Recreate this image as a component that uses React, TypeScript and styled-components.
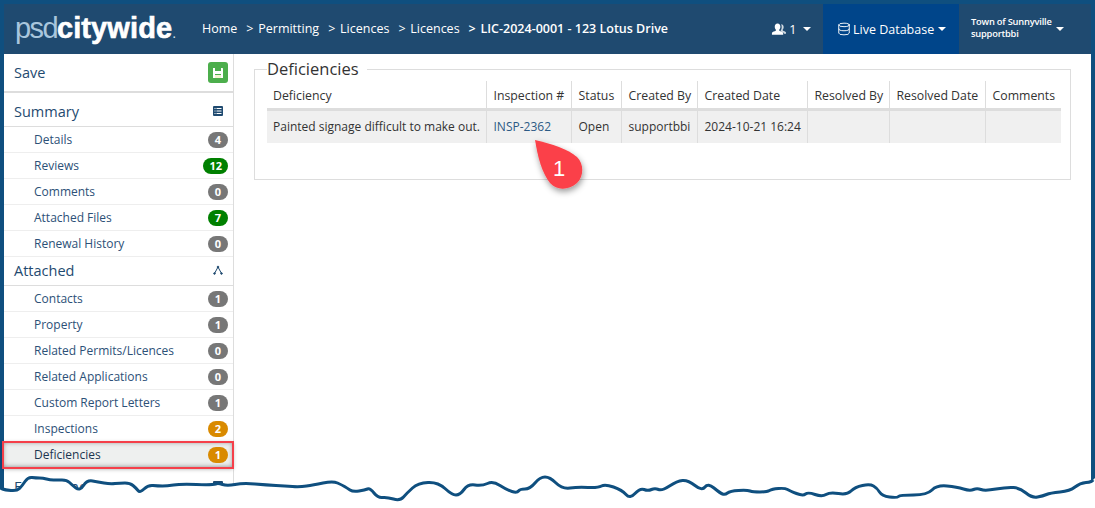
import { Database } from 'lucide-react';
import * as React from 'react';
import styled, { createGlobalStyle } from 'styled-components';

const GlobalStyle = createGlobalStyle`
  html, body {
    margin: 0;
    padding: 0;
    background: #fff;
    overflow: hidden;
  }
`;

const Page = styled.div`
  position: relative;
  box-sizing: border-box;
  width: 1095px;
  height: 508px;
  overflow: hidden;
  padding: 4px 4px 0;
  background: #0f4f7f;
  font-family: 'Open Sans', 'Liberation Sans', sans-serif;
  font-size: 13px;
  color: #333;
`;

const TopBar = styled.header`
  display: flex;
  align-items: stretch;
  height: 50px;
  background: #1f4a70;
  color: #fff;
  font-size: 12.5px;
`;

const Logo = styled.div`
  width: 198px;
  padding-left: 11px;
  box-sizing: border-box;
  font-family: 'Liberation Sans', Arial, sans-serif;
  font-size: 29px;
  line-height: 49px;
  letter-spacing: -1.6px;
  color: #a9c6dd;
  white-space: nowrap;
`;

const LogoStrong = styled.span`
  font-weight: 700;
  letter-spacing: 0.1px;
  color: #fff;
  -webkit-text-stroke: 0.6px #fff;
`;

const LogoDot = styled.span`
  font-size: 14px;
  letter-spacing: 0;
  color: #d8e4ee;
`;

const Crumbs = styled.nav`
  display: flex;
  align-items: center;
  flex: 1;
  padding-bottom: 2px;
  white-space: nowrap;
`;

const Crumb = styled.span<{ $current?: boolean; $first?: boolean }>`
  margin-left: ${({ $first }) => ($first ? '0' : '9px')};
  font-weight: ${({ $current }) => ($current ? 600 : 400)};
`;

const CrumbArrow = styled.span`
  margin-right: 1.5px;
`;

const Caret = styled.span<{ $gap: number }>`
  display: inline-block;
  width: 0;
  height: 0;
  margin-left: ${({ $gap }) => $gap}px;
  border-left: 4px solid transparent;
  border-right: 4px solid transparent;
  border-top: 4px solid #fff;
`;

const NavItem = styled.div<{ $active?: boolean; $width: number; $pad: number }>`
  display: flex;
  align-items: center;
  box-sizing: border-box;
  width: ${({ $width }) => $width}px;
  padding-left: ${({ $pad }) => $pad}px;
  background: ${({ $active }) => ($active ? '#00458a' : 'transparent')};
`;

const UserName = styled.div`
  margin-bottom: 3px;
  font-size: 9.3px;
  font-weight: 600;
  line-height: 11.5px;
  letter-spacing: -0.2px;
  white-space: nowrap;
`;

const DbIcon = styled(Database)`
  margin-right: 2px;
`;

const Body = styled.div`
  display: flex;
  height: 454px;
  background: #fff;
`;

const Sidebar = styled.aside`
  box-sizing: border-box;
  width: 230px;
  border-right: 1px solid #ddd;
`;

const SaveRow = styled.div`
  display: flex;
  align-items: center;
  justify-content: space-between;
  box-sizing: border-box;
  height: 39px;
  padding: 0 5px 0 10px;
  border-bottom: 2px solid #ddd;
  font-size: 14.5px;
  color: #1f4a70;
`;

const SaveButton = styled.span`
  display: flex;
  align-items: center;
  justify-content: center;
  width: 20px;
  height: 21px;
  border-radius: 3px;
  background: #4cae4c;
`;

const SectionRow = styled.div<{ $height: number; $shift: number }>`
  display: flex;
  align-items: center;
  justify-content: space-between;
  box-sizing: border-box;
  height: ${({ $height }) => $height}px;
  padding: ${({ $shift }) => ($shift > 0 ? `${$shift}px 10px 0` : `0 10px ${-$shift}px`)};
  border-bottom: 1px solid #ddd;
  font-size: 14.5px;
  color: #1f4a70;
`;

const ItemRow = styled.div<{ $selected?: boolean }>`
  position: relative;
  display: flex;
  align-items: center;
  justify-content: space-between;
  box-sizing: border-box;
  height: 26px;
  padding: 0 5px 0 30px;
  border-bottom: 1px solid #eee;
  font-size: 12px;
  color: ${({ $selected }) => ($selected ? '#1c3550' : '#2c5077')};
  ${({ $selected }) =>
    $selected &&
    `
    margin-left: -1px;
    padding-left: 31px;
    background: #eef0ef;
    outline: 2px solid #f5404a;
    outline-offset: -1px;
    box-shadow: inset 0 0 5px rgba(0, 0, 0, 0.45), 0 1px 4px rgba(0, 0, 0, 0.35);
  `}
`;

const Badge = styled.span<{ $tone: 'grey' | 'green' | 'orange' }>`
  min-width: 20px;
  padding: 0 ${({ children }) => (String(children).length > 1 ? '6px' : '0')};
  box-sizing: border-box;
  height: 16px;
  border-radius: 8px;
  background: ${({ $tone }) =>
    $tone === 'green' ? '#008000' : $tone === 'orange' ? '#d98a00' : '#777'};
  color: #fff;
  font-size: 11px;
  font-weight: 700;
  line-height: 16px;
  text-align: center;
`;

const Main = styled.main`
  flex: 1;
  padding: 7px 20px 0;
`;

const Panel = styled.fieldset`
  box-sizing: border-box;
  height: 119px;
  margin: 0;
  padding: 0 9px 0 12px;
  border: 1px solid #ddd;
`;

const PanelTitle = styled.legend`
  padding: 0 8px 0 0;
  margin-left: 0;
  font-size: 16.5px;
  line-height: 16px;
  color: #333;
`;

const Table = styled.table`
  table-layout: fixed;
  width: 794px;
  margin-top: 4px;
  border-collapse: collapse;
`;

const HeadCell = styled.th`
  box-sizing: border-box;
  height: 28px;
  padding: 3px 0 0 7px;
  border-bottom: 3px solid #ddd;
  border-left: 1px solid #ddd;
  font-weight: 500;
  font-size: 12.3px;
  text-align: left;
  white-space: nowrap;
  &:first-child {
    padding-left: 6px;
    border-left: 0;
  }
`;

const Cell = styled.td`
  height: 32px;
  padding: 0 0 0 7px;
  border-left: 1px solid #ddd;
  background: #f0f0f0;
  font-size: 12px;
  white-space: nowrap;
  &:first-child {
    padding-left: 6px;
    border-left: 0;
  }
`;

const LinkText = styled.a`
  color: #2c5a85;
`;

const Callout = styled.div`
  position: absolute;
  left: 530px;
  top: 136px;
  width: 62px;
  height: 64px;
`;

const CalloutNumber = styled.span`
  position: absolute;
  left: 23px;
  top: 20px;
  width: 12px;
  font-family: 'Liberation Sans', Arial, sans-serif;
  font-size: 22px;
  line-height: 26px;
  text-align: center;
  color: #fff;
`;

const TornEdge = styled.svg`
  position: absolute;
  left: 0;
  top: 0;
`;

const WAVE = [
  [0, 488], [5, 490], [17, 491], [22, 486], [28, 477], [36, 478], [43, 478], [50, 480], [57, 480],
  [67, 480], [72, 485], [80, 491], [87, 480], [98, 482], [110, 484], [120, 483], [130, 483], [136, 488],
  [140, 493], [148, 485], [158, 486], [167, 486], [180, 484], [213, 485], [218, 483], [227, 486],
  [243, 483], [267, 485], [285, 486], [300, 487], [313, 485], [333, 481], [342, 485], [347, 488],
  [353, 492], [365, 490], [370, 488], [378, 498], [387, 497], [400, 501], [407, 493], [418, 483],
  [438, 482], [452, 495], [460, 495], [468, 484], [482, 486], [493, 481], [507, 490], [517, 493],
  [520, 489], [530, 489], [540, 477], [550, 477], [562, 489], [578, 487], [598, 488], [605, 484],
  [622, 490], [630, 499], [640, 488], [648, 491], [655, 488], [662, 491], [677, 481], [688, 480],
  [702, 491], [708, 483], [720, 493], [725, 495], [730, 491], [747, 490], [753, 492], [767, 492],
  [772, 489], [785, 488], [790, 491], [803, 496], [808, 492], [822, 497], [830, 492], [847, 495],
  [855, 487], [870, 484], [877, 488], [882, 496], [897, 498], [900, 495], [927, 495], [937, 485],
  [957, 487], [970, 491], [977, 488], [985, 491], [1007, 487], [1020, 488], [1032, 498], [1043, 496],
  [1050, 493], [1070, 491], [1080, 483], [1092, 482], [1094, 478],
];

// smooth the traced points a little, the edge in the picture has no hard corners
const wavePath = WAVE.slice(1).reduce((path, [x, y], index) => {
  const [prevX, prevY] = WAVE[index];
  return `${path} Q${prevX} ${prevY} ${(prevX + x) / 2} ${(prevY + y) / 2}`;
}, `M${WAVE[0][0]} ${WAVE[0][1]}`);

const summary = [
  { label: 'Details', count: '4', tone: 'grey' },
  { label: 'Reviews', count: '12', tone: 'green' },
  { label: 'Comments', count: '0', tone: 'grey' },
  { label: 'Attached Files', count: '7', tone: 'green' },
  { label: 'Renewal History', count: '0', tone: 'grey' },
] as const;

const attached = [
  { label: 'Contacts', count: '1', tone: 'grey' },
  { label: 'Property', count: '1', tone: 'grey' },
  { label: 'Related Permits/Licences', count: '0', tone: 'grey' },
  { label: 'Related Applications', count: '0', tone: 'grey' },
  { label: 'Custom Report Letters', count: '1', tone: 'grey' },
  { label: 'Inspections', count: '2', tone: 'orange' },
  { label: 'Deficiencies', count: '1', tone: 'orange' },
] as const;

const columns = [
  { title: 'Deficiency', width: 219, value: 'Painted signage difficult to make out.' },
  { title: 'Inspection #', width: 85, value: 'INSP-2362' },
  { title: 'Status', width: 50, value: 'Open' },
  { title: 'Created By', width: 76, value: 'supportbbi' },
  { title: 'Created Date', width: 110, value: '2024-10-21 16:24' },
  { title: 'Resolved By', width: 82, value: '' },
  { title: 'Resolved Date', width: 96, value: '' },
  { title: 'Comments', width: 76, value: '' },
];

function App() {
  return (
    <Page>
      <GlobalStyle />
      <TopBar>
        <Logo>
          psd<LogoStrong>citywide</LogoStrong>
          <LogoDot>.</LogoDot>
        </Logo>
        <Crumbs>
          <Crumb $first>Home</Crumb>
          <Crumb>
            <CrumbArrow>&gt;</CrumbArrow> Permitting
          </Crumb>
          <Crumb>
            <CrumbArrow>&gt;</CrumbArrow> Licences
          </Crumb>
          <Crumb>
            <CrumbArrow>&gt;</CrumbArrow> Licences
          </Crumb>
          <Crumb $current>
            <CrumbArrow>&gt;</CrumbArrow> LIC-2024-0001 - 123 Lotus Drive
          </Crumb>
        </Crumbs>
        <NavItem $width={59} $pad={7}>
          <svg width="15" height="13" viewBox="0 0 16 13" fill="#fff">
            <path d="M7 0c2 0 3 1.600 3 3.500 0 1.500-.6 2.700-1.300 3.300 0 .8.300 1.200 1.300 1.600 1.500.5 3 1 3 2.100V12H1v-1.500c0-1.100 1.500-1.600 3-2.100 1-.4 1.300-.8 1.300-1.600C4.600 6.200 4 5 4 3.500 4 1.600 5 0 7 0z" />
            <path d="M10.800.8c1.700 0 2.700 1.400 2.700 3 0 1.300-.5 2.400-1.100 2.900 0 .7.300 1 1.100 1.400 1.200.4 2.500.8 2.500 1.800V11h-2c-.2-1.300-1.600-2-3-2.500-.5-.2-.8-.4-.8-.8.700-.8 1.200-2.300 1.200-4 0-1-.2-1.900-.6-2.900z" opacity=".8" />
          </svg>
          &nbsp;1
          <Caret $gap={7} />
        </NavItem>
        <NavItem $active $width={136} $pad={14}>
          <DbIcon size={14} strokeWidth={1.6} />
          Live Database
          <Caret $gap={4} />
        </NavItem>
        <NavItem $width={132} $pad={12}>
          <UserName>
            Town of Sunnyville
            <br />
            supportbbi
          </UserName>
          <Caret $gap={4} />
        </NavItem>
      </TopBar>
      <Body>
        <Sidebar>
          <SaveRow>
            Save
            <SaveButton>
              <svg width="12" height="12" viewBox="0 0 12 12" fill="#fff">
                <path d="M1 1h2v3h6V1h1.500L11 1.500V11H9V7H3v4H1z" />
                <path d="M3 8h6v3H3z" fill="#f4f4d0" />
              </svg>
            </SaveButton>
          </SaveRow>
          <SectionRow $height={34} $shift={3}>
            Summary
            <svg width="10" height="10" viewBox="0 0 10 10">
              <rect width="10" height="10" rx="1" fill="#1f4a70" />
              <path d="M1.500 2.500h1M3.500 2.500h5M1.500 5h1M3.500 5h5M1.500 7.500h1M3.500 7.500h5" stroke="#fff" strokeWidth="1" />
            </svg>
          </SectionRow>
          {summary.map((item) => (
            <ItemRow key={item.label}>
              {item.label}
              <Badge $tone={item.tone}>{item.count}</Badge>
            </ItemRow>
          ))}
          <SectionRow $height={29} $shift={-2}>
            Attached
            <svg width="10" height="10" viewBox="0 0 10 10" fill="#1f4a70" stroke="#1f4a70" strokeWidth="1">
              <path d="M1.500 8.500L5 2l3.500 6.500" fill="none" />
              <circle cx="5" cy="2" r=".8" />
              <circle cx="1.500" cy="8.500" r=".8" />
              <circle cx="8.500" cy="8.500" r=".8" />
            </svg>
          </SectionRow>
          {attached.map((item) => (
            <ItemRow key={item.label} $selected={item.label === 'Deficiencies'}>
              {item.label}
              <Badge $tone={item.tone}>{item.count}</Badge>
            </ItemRow>
          ))}
          <SectionRow $height={34} $shift={3}>
            Fee Payment
            <svg width="10" height="10" viewBox="0 0 10 10">
              <rect width="10" height="10" rx="1" fill="#1f4a70" />
            </svg>
          </SectionRow>
        </Sidebar>
        <Main>
          <Panel>
            <PanelTitle>Deficiencies</PanelTitle>
            <Table>
              <colgroup>
                {columns.map((column) => (
                  <col key={column.title} width={column.width} />
                ))}
              </colgroup>
              <thead>
                <tr>
                  {columns.map((column) => (
                    <HeadCell key={column.title}>{column.title}</HeadCell>
                  ))}
                </tr>
              </thead>
              <tbody>
                <tr>
                  {columns.map((column) => (
                    <Cell key={column.title}>
                      {column.title === 'Inspection #' ? (
                        <LinkText>{column.value}</LinkText>
                      ) : (
                        column.value
                      )}
                    </Cell>
                  ))}
                </tr>
              </tbody>
            </Table>
          </Panel>
        </Main>
      </Body>
      <Callout>
        <svg width="62" height="64" viewBox="0 0 62 64">
          <defs>
            <filter id="pinShadow" x="-30%" y="-30%" width="160%" height="160%">
              <feDropShadow dx="1" dy="3" stdDeviation="3" floodColor="#000" floodOpacity="0.4" />
            </filter>
          </defs>
          <path
            d="M5 4C22 8 38 13 47 21c7 7 7 19 0 26-8 7-20 8-27 0C12 37 8 22 5 4z"
            fill="#fb4148"
            filter="url(#pinShadow)"
          />
        </svg>
        <CalloutNumber>1</CalloutNumber>
      </Callout>
      <TornEdge width="1095" height="508" viewBox="0 0 1095 508">
        <path d={`${wavePath} L1095 478 L1095 508 L0 508 Z`} fill="#fff" />
        <path d={wavePath} fill="none" stroke="#0f4f7f" strokeWidth="3" strokeLinejoin="round" />
      </TornEdge>
    </Page>
  );
}

export default App;
